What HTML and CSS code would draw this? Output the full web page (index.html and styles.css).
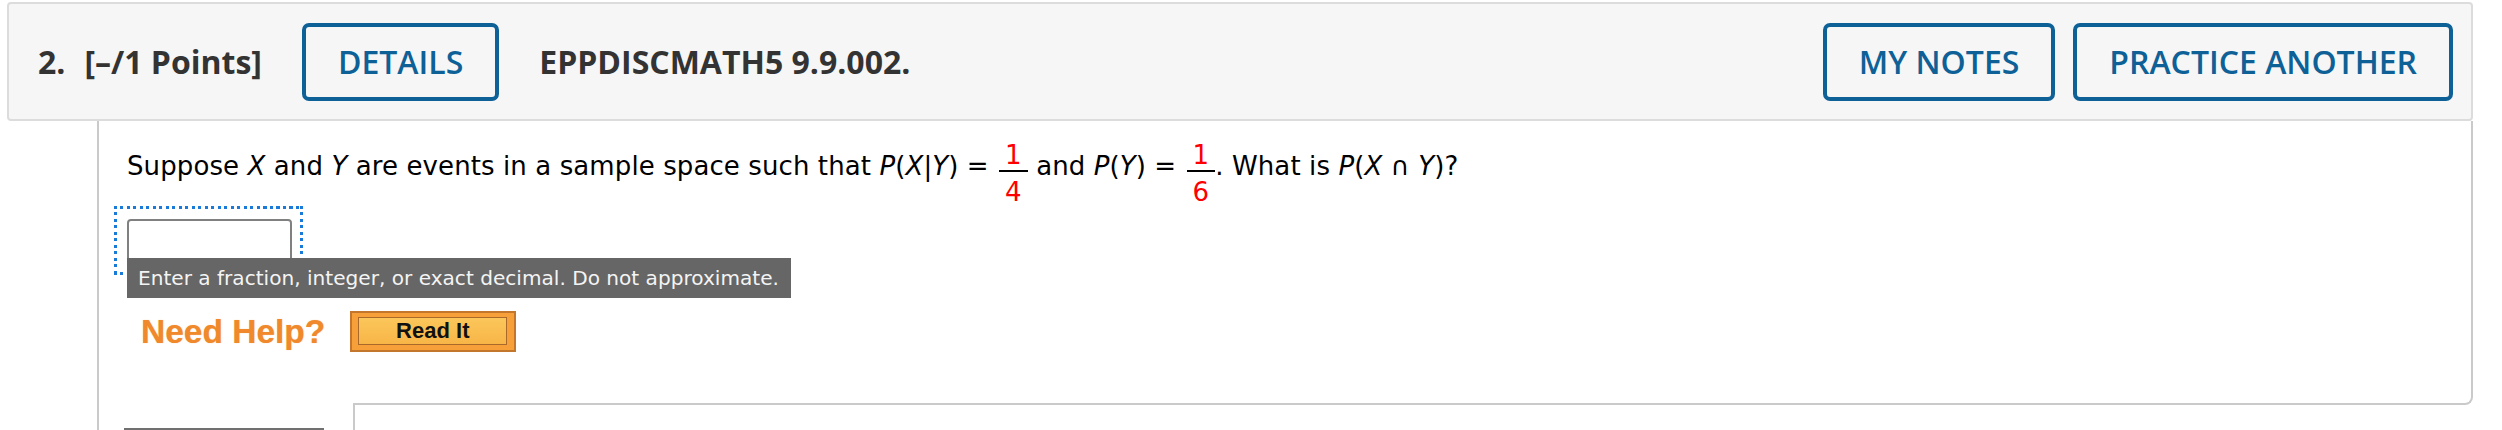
FILE: index.html
```html
<!DOCTYPE html>
<html lang="en">
<head>
<meta charset="utf-8">
<title>Question 2</title>
<link rel="stylesheet" href="styles.css">
</head>
<body>
<div class="page">
  <div class="qhead">
    <div class="qid"><span class="qnum">2.</span><span class="pts">[–/1 Points]</span></div>
    <button class="btn">DETAILS</button>
    <div class="qcode">EPPDISCMATH5 9.9.002.</div>
    <div class="head-right">
      <button class="btn">MY NOTES</button>
      <button class="btn">PRACTICE ANOTHER</button>
    </div>
  </div>
  <div class="qbody">
    <div class="qmain">
      <p class="question">Suppose <i>X</i> and <i>Y</i> are events in a sample space such that <i>P</i>(<i>X</i>|<i>Y</i>) = <span class="frac"><span class="num">1</span><span class="den">4</span></span> and <i>P</i>(<i>Y</i>) = <span class="frac"><span class="num">1</span><span class="den">6</span></span>. What is <i>P</i>(<i>X</i> ∩ <i>Y</i>)?</p>
      <div class="answer">
        <input class="ans-input" type="text" aria-label="answer">
        <div class="tip">Enter a fraction, integer, or exact decimal. Do not approximate.</div>
      </div>
      <div class="help">
        <span class="need">Need Help?</span>
        <span class="readit"><span class="readit-in">Read It</span></span>
      </div>
    </div>
    <div class="qfoot">
      <div class="foot-left"><div class="submit-edge"></div></div>
      <div class="work"></div>
    </div>
  </div>
</div>
</body>
</html>
```

FILE: styles.css
```css
html, body {
  margin: 0;
  padding: 0;
  background: #fff;
  overflow: hidden;
}

.page {
  padding: 2px 29px 0 7px;
}

/* ---------- header ---------- */
.qhead {
  box-sizing: border-box;
  height: 119px;
  display: flex;
  align-items: center;
  gap: 40px;
  padding: 0 18px 0 29px;
  background: #f6f6f6;
  border: 2px solid #dcdcdc;
  border-radius: 4px;
  font-family: "Open Sans", "DejaVu Sans", sans-serif;
  color: #333;
}

.qid {
  font-size: 32px;
  font-weight: 700;
  white-space: nowrap;
}

.pts {
  margin-left: 19px;
}

.qcode {
  font-size: 32px;
  font-weight: 700;
  white-space: nowrap;
}

.btn {
  box-sizing: border-box;
  height: 78px;
  padding: 0 32px;
  border: 4px solid #0e6196;
  border-radius: 7px;
  background: transparent;
  color: #0e6196;
  font-family: "Open Sans", "DejaVu Sans", sans-serif;
  font-size: 32px;
  font-weight: 600;
  white-space: nowrap;
  cursor: pointer;
}

.head-right {
  margin-left: auto;
  display: flex;
  gap: 18px;
}

/* ---------- question body ---------- */
.qbody {
  margin-left: 90px;
}

.qmain {
  padding: 21px 28px 51px 28px;
  border-left: 2px solid #cacaca;
  border-right: 2px solid #cacaca;
  border-bottom: 2px solid #cacaca;
  border-bottom-right-radius: 8px;
}

.question {
  margin: 0;
  font-family: "DejaVu Sans", Verdana, sans-serif;
  font-size: 26px;
  letter-spacing: 0.1px;
  color: #000;
}

.question i {
  font-style: italic;
}

.frac {
  display: inline-block;
  vertical-align: -26px;
  margin-left: 2px;
  text-align: center;
  line-height: 26px;
}

.num,
.den {
  display: block;
  padding: 0 6px;
  color: #f00;
}

.den {
  margin-top: 2px;
  padding-top: 7px;
  border-top: 2px solid #000;
}

/* ---------- answer field ---------- */
.answer {
  position: relative;
  width: fit-content;
  margin: 1px 0 0 -13px;
  padding: 13px 11px 12px 13px;
  background:
    repeating-linear-gradient(90deg, #1a7ad8 0 3px, transparent 3px 6.5px) left top / 100% 3px no-repeat,
    repeating-linear-gradient(90deg, #1a7ad8 0 3px, transparent 3px 6.5px) left bottom / 100% 3px no-repeat,
    repeating-linear-gradient(180deg, #1a7ad8 0 3px, transparent 3px 6.5px) left top / 3px 100% no-repeat,
    repeating-linear-gradient(180deg, #1a7ad8 0 3px, transparent 3px 6.5px) right top / 3px 100% no-repeat;
}

.ans-input {
  display: block;
  box-sizing: border-box;
  width: 165px;
  height: 44px;
  margin: 0;
  border: 2px solid #808080;
  border-radius: 4px;
  background: #fff;
  font-family: "DejaVu Sans", sans-serif;
  font-size: 22px;
  outline: none;
}

.tip {
  position: absolute;
  left: 13px;
  top: 52px;
  z-index: 2;
  padding: 8px 12px 8px 11px;
  background: #666;
  color: #f4f4f4;
  font-family: "DejaVu Sans", Verdana, sans-serif;
  font-size: 20.1px;
  line-height: 24px;
  white-space: nowrap;
}

/* ---------- help row ---------- */
.help {
  display: flex;
  align-items: center;
  gap: 25px;
  margin: 36px 0 0 14px;
}

.need {
  font-family: "Liberation Sans", Arial, sans-serif;
  font-size: 33.5px;
  font-weight: 700;
  color: #f0892b;
  text-shadow: 0 0 1px rgba(240, 137, 43, 0.6);
}

.readit {
  box-sizing: border-box;
  display: flex;
  width: 166px;
  height: 41px;
  padding: 4px 7px 5px 6px;
  border: 2px solid #c3772d;
  background: #f7a03a;
}

.readit-in {
  flex: 1;
  display: flex;
  align-items: center;
  justify-content: center;
  border: 1px solid #a8692a;
  background: linear-gradient(#fbc65a, #f8b547);
  font-family: "Liberation Sans", Arial, sans-serif;
  font-size: 22px;
  font-weight: 700;
  color: #111;
}

/* ---------- footer ---------- */
.qfoot {
  display: flex;
  height: 40px;
  margin-top: -2px;
}

.foot-left {
  flex: none;
  width: 254px;
  border-left: 2px solid #cacaca;
  background: #fff;
}

.submit-edge {
  width: 200px;
  margin: 25px 0 0 25px;
  border-top: 3px solid #707070;
}

.work {
  flex: 1;
  border-left: 2px solid #cacaca;
}
```
